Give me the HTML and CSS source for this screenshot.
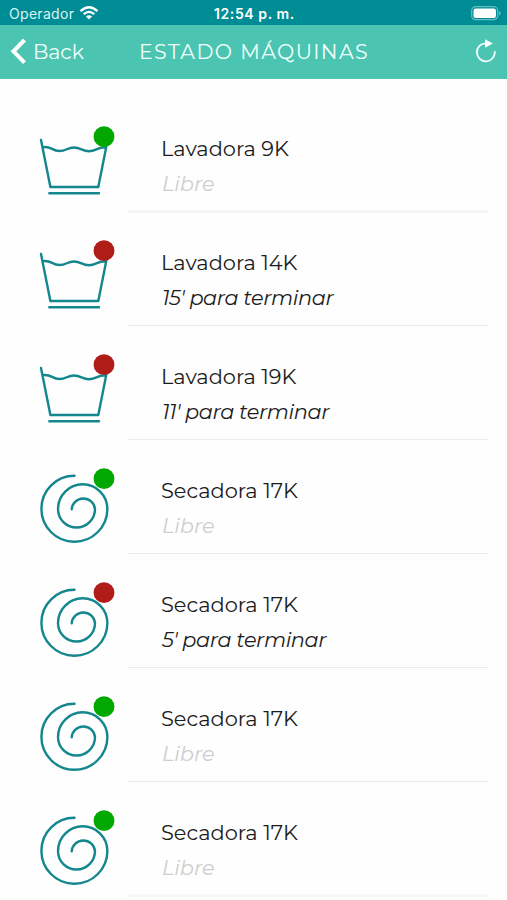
FILE: index.html
```html
<!DOCTYPE html>
<html lang="es">
<head>
<meta charset="utf-8">
<title>Estado máquinas</title>
<link rel="stylesheet" href="styles.css">
</head>
<body>
<svg width="0" height="0" class="defs">
  <symbol id="washer" viewBox="0 0 128 114"><path d="M41 42 50.400 89H98.300L106.300 48.700M42.500 49.200C51 47.500 52 53 59.300 53S67 49.500 74 49.500s8 3.700 15 3.700 8-4 16-4M49.300 95.300H99"/></symbol>
  <symbol id="dryer" viewBox="0 0 128 114"><path d="M74.500 35.800A33 33 0 1 0 107.400 69A24.700 24.700 0 0 0 58 69A18.500 18.500 0 0 0 95 69A11.700 11.700 0 0 0 71.700 69.300"/></symbol>
</svg>
<header class="status">
  <span class="carrier">Operador</span>
  <svg class="wifi" width="20" height="14" viewBox="0 0 20 14"><path d="M1.500 5.200Q10-2.600 18.500 5.200M4.700 8.200Q10 3.600 15.300 8.200" fill="none" stroke="#fff" stroke-width="2.300"/><path d="M6.900 10.500Q10 8 13.100 10.500L10 13.600Z" fill="#fff"/></svg>
  <span class="time">12:54 p. m.</span>
  <svg class="battery" width="30" height="15" viewBox="0 0 30 15"><rect x=".7" y=".7" width="26" height="13" rx="4" fill="none" stroke="#66bdbf" stroke-width="1.200"/><rect x="2.500" y="2.500" width="22.500" height="9.500" rx="2.300" fill="#fff"/><path d="M28 5v4.500q1.600-.6 1.600-2.250T28 5" fill="#66bdbf"/></svg>
</header>
<nav class="nav">
  <svg class="chevron" width="16" height="26" viewBox="0 0 16 26"><path d="M14.500 2 3.500 13.300 14.500 24.600" fill="none" stroke="#fff" stroke-width="4"/></svg>
  <span class="back">Back</span>
  <h1 class="title">ESTADO MÁQUINAS</h1>
  <svg class="reload" width="22" height="24" viewBox="0 0 22 24"><path d="M12 4.300H11A9 9 0 1 0 19.800 12.200" fill="none" stroke="#f0fffc" stroke-width="1.800"/><path d="M10 .3 17.800 4.500 10 8.700Z" fill="#fff"/></svg>
</nav>
<main class="list">
  <section class="row soft"><svg class="icon"><use href="#washer"/><circle class="free" cx="104" cy="38.700" r="10.400"/></svg><div class="info"><h2>Lavadora 9K</h2><p class="idle">Libre</p></div></section>
  <section class="row"><svg class="icon"><use href="#washer"/><circle class="busy" cx="104" cy="38.700" r="10.400"/></svg><div class="info"><h2>Lavadora 14K</h2><p>15' para terminar</p></div></section>
  <section class="row"><svg class="icon"><use href="#washer"/><circle class="busy" cx="104" cy="38.700" r="10.400"/></svg><div class="info"><h2>Lavadora 19K</h2><p>11' para terminar</p></div></section>
  <section class="row"><svg class="icon"><use href="#dryer"/><circle class="free" cx="104" cy="38.700" r="10.400"/></svg><div class="info"><h2>Secadora 17K</h2><p class="idle">Libre</p></div></section>
  <section class="row"><svg class="icon"><use href="#dryer"/><circle class="busy" cx="104" cy="38.700" r="10.400"/></svg><div class="info"><h2>Secadora 17K</h2><p>5' para terminar</p></div></section>
  <section class="row"><svg class="icon"><use href="#dryer"/><circle class="free" cx="104" cy="38.700" r="10.400"/></svg><div class="info"><h2>Secadora 17K</h2><p class="idle">Libre</p></div></section>
  <section class="row soft"><svg class="icon"><use href="#dryer"/><circle class="free" cx="104" cy="38.700" r="10.400"/></svg><div class="info"><h2>Secadora 17K</h2><p class="idle">Libre</p></div></section>
</main>
</body>
</html>
```
FILE: styles.css
```css
* { box-sizing: border-box; }
body { margin: 0; height: 900px; overflow: hidden; background: #fefefe; font-family: Montserrat, Inter, sans-serif; color: #1c1c1c; }
.defs { display: block; }
h1, h2, p { margin: 0; font-weight: 400; white-space: nowrap; }
.status { height: 25px; background: #008c95; color: #fff; display: grid; grid-template-columns: 70px 144px 248px 30px; padding-left: 9px; align-items: center; font-family: Inter, sans-serif; padding-top: 2px; line-height: 20px; }
.carrier { font-size: 14px; letter-spacing: .3px; color: #d9f3f3; }
.wifi { margin: -1px 0 0 0; }
.time { font-size: 14px; font-weight: 600; letter-spacing: .6px; margin-left: -9px; }
.battery { margin-top: -1px; }
.nav { height: 54px; background: #4bc5b1; color: #f0fffc; display: grid; grid-template-columns: 23px 106px 336px 22px; padding-left: 10px; align-items: center; }
.chevron { margin-top: -2px; }
.back { font-size: 20.5px; letter-spacing: -.1px; margin-top: -1px; }
.title { font-size: 20.5px; letter-spacing: 1.4px; margin-top: -1px; }
.reload { margin-top: -3px; }
.list { padding-top: 19px; }
.row { height: 114px; display: flex; }
.icon { width: 128px; height: 114px; flex: none; fill: none; stroke: #13878d; stroke-width: 2.400; stroke-linecap: round; stroke-linejoin: round; }
.free { fill: #00a800; stroke: none; }
.busy { fill: #b01c18; stroke: none; }
.info { width: 360px; padding: 33px 0 0 33px; border-bottom: 1px solid #ebebeb; }
.soft .info { height: 115px; border-bottom: 3px solid #f6f6f6; }
h2, .info p { font-size: 20.9px; line-height: 35px; letter-spacing: 0; }
.info p { font-style: italic; letter-spacing: -.42px; padding-left: 1px; }
.info .idle { color: #cecece; letter-spacing: -.05px; }
```
